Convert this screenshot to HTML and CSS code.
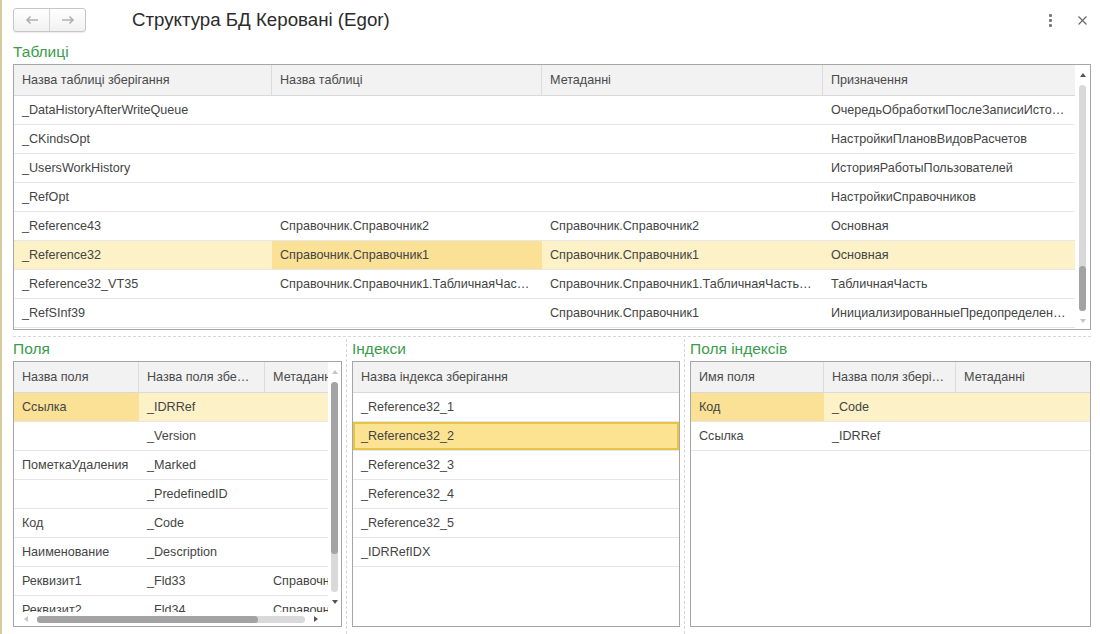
FILE: index.html
```html
<!DOCTYPE html>
<html lang="uk">
<head>
    <meta charset="UTF-8">
    <title>Структура БД Керовані (Egor)</title>
    <link rel="stylesheet" href="styles.css">
</head>
<body>
<div class="window">
    <header class="topbar">
        <div class="nav">
            <button class="nav-btn">
                <svg width="14" height="10" viewBox="0 0 14 10"><path d="M13 5H2M5.5 1.5L2 5l3.5 3.5" fill="none" stroke="#b0b0b0" stroke-width="1.6"/></svg>
            </button>
            <button class="nav-btn">
                <svg width="14" height="10" viewBox="0 0 14 10"><path d="M1 5h11M8.5 1.5L12 5 8.5 8.5" fill="none" stroke="#b0b0b0" stroke-width="1.6"/></svg>
            </button>
        </div>
        <h1 class="title">Структура БД Керовані (Egor)</h1>
        <div class="actions">
            <span class="kebab"><i></i><i></i><i></i></span>
            <svg class="close" width="9" height="9" viewBox="0 0 9 9"><path d="M0.5 0.5l8 8M8.5 0.5l-8 8" stroke="#666" stroke-width="1.1"/></svg>
        </div>
    </header>

    <div class="group-title">Таблиці</div>
    <div class="grid tables">
        <div class="grid-main">
            <div class="row head">
                <div class="cell">Назва таблиці зберігання</div>
                <div class="cell">Назва таблиці</div>
                <div class="cell">Метаданні</div>
                <div class="cell">Призначення</div>
            </div>
            <div class="rows">
                <div class="row">
                    <div class="cell">_DataHistoryAfterWriteQueue</div>
                    <div class="cell"></div>
                    <div class="cell"></div>
                    <div class="cell">ОчередьОбработкиПослеЗаписиИсторииДанных</div>
                </div>
                <div class="row">
                    <div class="cell">_CKindsOpt</div>
                    <div class="cell"></div>
                    <div class="cell"></div>
                    <div class="cell">НастройкиПлановВидовРасчетов</div>
                </div>
                <div class="row">
                    <div class="cell">_UsersWorkHistory</div>
                    <div class="cell"></div>
                    <div class="cell"></div>
                    <div class="cell">ИсторияРаботыПользователей</div>
                </div>
                <div class="row">
                    <div class="cell">_RefOpt</div>
                    <div class="cell"></div>
                    <div class="cell"></div>
                    <div class="cell">НастройкиСправочников</div>
                </div>
                <div class="row">
                    <div class="cell">_Reference43</div>
                    <div class="cell">Справочник.Справочник2</div>
                    <div class="cell">Справочник.Справочник2</div>
                    <div class="cell">Основная</div>
                </div>
                <div class="row selected">
                    <div class="cell">_Reference32</div>
                    <div class="cell current">Справочник.Справочник1</div>
                    <div class="cell">Справочник.Справочник1</div>
                    <div class="cell">Основная</div>
                </div>
                <div class="row">
                    <div class="cell">_Reference32_VT35</div>
                    <div class="cell">Справочник.Справочник1.ТабличнаяЧасть1</div>
                    <div class="cell">Справочник.Справочник1.ТабличнаяЧасть1.Товары</div>
                    <div class="cell">ТабличнаяЧасть</div>
                </div>
                <div class="row">
                    <div class="cell">_RefSInf39</div>
                    <div class="cell"></div>
                    <div class="cell">Справочник.Справочник1</div>
                    <div class="cell">ИнициализированныеПредопределенныеДанные</div>
                </div>
            </div>
        </div>
        <div class="vscroll">
            <span class="arr up dark"></span>
            <div class="track end"><div class="thumb" style="height: 45px"></div></div>
            <span class="arr down"></span>
        </div>
    </div>

    <div class="hsep"></div>

    <div class="bottom">
        <section class="panel fields">
            <div class="group-title">Поля</div>
            <div class="grid">
                <div class="grid-main">
                    <div class="row head">
                        <div class="cell">Назва поля</div>
                        <div class="cell">Назва поля зберігання</div>
                        <div class="cell clip">Метаданні</div>
                    </div>
                    <div class="rows">
                        <div class="row selected">
                            <div class="cell current">Ссылка</div>
                            <div class="cell">_IDRRef</div>
                            <div class="cell clip"></div>
                        </div>
                        <div class="row">
                            <div class="cell"></div>
                            <div class="cell">_Version</div>
                            <div class="cell clip"></div>
                        </div>
                        <div class="row">
                            <div class="cell">ПометкаУдаления</div>
                            <div class="cell">_Marked</div>
                            <div class="cell clip"></div>
                        </div>
                        <div class="row">
                            <div class="cell"></div>
                            <div class="cell">_PredefinedID</div>
                            <div class="cell clip"></div>
                        </div>
                        <div class="row">
                            <div class="cell">Код</div>
                            <div class="cell">_Code</div>
                            <div class="cell clip"></div>
                        </div>
                        <div class="row">
                            <div class="cell">Наименование</div>
                            <div class="cell">_Description</div>
                            <div class="cell clip"></div>
                        </div>
                        <div class="row">
                            <div class="cell">Реквизит1</div>
                            <div class="cell">_Fld33</div>
                            <div class="cell clip">Справочник.Справочник1</div>
                        </div>
                        <div class="row">
                            <div class="cell">Реквизит2</div>
                            <div class="cell">_Fld34</div>
                            <div class="cell clip">Справочник.Справочник2</div>
                        </div>
                    </div>
                    <div class="hscroll">
                        <span class="arr left"></span>
                        <div class="htrack"><div class="hthumb" style="width: 221px"></div></div>
                        <span class="arr right dark"></span>
                    </div>
                </div>
                <div class="vscroll narrow">
                    <span class="arr up"></span>
                    <div class="track"><div class="thumb" style="height: 172px"></div></div>
                    <span class="arr down dark"></span>
                    <div class="corner"></div>
                </div>
            </div>
        </section>

        <div class="vsep"></div>

        <section class="panel indexes">
            <div class="group-title">Індекси</div>
            <div class="grid">
                <div class="grid-main">
                    <div class="row head">
                        <div class="cell">Назва індекса зберігання</div>
                    </div>
                    <div class="rows">
                        <div class="row"><div class="cell">_Reference32_1</div></div>
                        <div class="row picked"><div class="cell">_Reference32_2</div></div>
                        <div class="row"><div class="cell">_Reference32_3</div></div>
                        <div class="row"><div class="cell">_Reference32_4</div></div>
                        <div class="row"><div class="cell">_Reference32_5</div></div>
                        <div class="row"><div class="cell">_IDRRefIDX</div></div>
                    </div>
                </div>
            </div>
        </section>

        <div class="vsep"></div>

        <section class="panel index-fields">
            <div class="group-title">Поля індексів</div>
            <div class="grid">
                <div class="grid-main">
                    <div class="row head">
                        <div class="cell">Имя поля</div>
                        <div class="cell">Назва поля зберігання</div>
                        <div class="cell">Метаданні</div>
                    </div>
                    <div class="rows">
                        <div class="row selected">
                            <div class="cell current">Код</div>
                            <div class="cell">_Code</div>
                            <div class="cell"></div>
                        </div>
                        <div class="row">
                            <div class="cell">Ссылка</div>
                            <div class="cell">_IDRRef</div>
                            <div class="cell"></div>
                        </div>
                    </div>
                </div>
            </div>
        </section>
    </div>
</div>
</body>
</html>
```

FILE: styles.css
```css
body {
    margin: 0;
    background: #fff;
    border-left: 2px solid #d3cb9f;
    font-family: "Liberation Sans", Arial, sans-serif;
    color: #444;
    height: 634px;
    overflow: hidden;
}
.window {
    padding: 0 9px 0 11px;
}

/* top bar */
.topbar {
    height: 40px;
    display: flex;
    align-items: center;
}
.nav {
    display: flex;
    width: 73px;
    height: 24px;
    box-sizing: border-box;
    border: 1px solid #c6c6c6;
    border-radius: 3px;
    background: linear-gradient(#fff, #f1f1f1);
    box-shadow: 0 1px 1px rgba(0, 0, 0, 0.08);
}
.nav-btn {
    flex: 1;
    border: 0;
    background: transparent;
    padding: 0;
    display: flex;
    align-items: center;
    justify-content: center;
}
.nav-btn + .nav-btn {
    border-left: 1px solid #d4d4d4;
}
.title {
    margin: 0 0 0 46px;
    font-size: 18.7px;
    font-weight: normal;
    color: #2b2b2b;
    flex: 1;
}
.actions {
    display: flex;
    align-items: center;
    gap: 26px;
    margin-right: 4px;
}
.kebab {
    display: flex;
    flex-direction: column;
    gap: 2px;
}
.kebab i {
    width: 3px;
    height: 3px;
    border-radius: 1px;
    background: #777;
}

/* group titles */
.group-title {
    height: 24px;
    line-height: 24px;
    font-size: 15.5px;
    color: #3b9c4c;
}

/* grids */
.grid {
    display: flex;
    height: 266px;
    box-sizing: border-box;
    border: 1px solid #a6a6a6;
    background: #fff;
    font-size: 12.6px;
}
.grid-main {
    flex: 1;
    min-width: 0;
    display: flex;
    flex-direction: column;
    overflow: hidden;
}
.rows {
    flex: 1;
    overflow: hidden;
}
.row {
    display: grid;
    height: 29px;
    box-sizing: border-box;
    border-bottom: 1px solid #e6e6e6;
}
.row.head {
    height: 31px;
    background: #f2f2f2;
    border-bottom: 1px solid #d9d9d9;
}
.cell {
    padding: 0 8px;
    line-height: 28px;
    white-space: nowrap;
    overflow: hidden;
    text-overflow: ellipsis;
}
.head .cell {
    line-height: 30px;
    color: #4a4a4a;
    border-right: 1px solid #dcdcdc;
}
.head .cell:last-child {
    border-right: 0;
}
.cell.clip {
    text-overflow: clip;
}
.row.selected {
    background: #fdf1c8;
}
.cell.current {
    background: #fae196;
}
.row.picked {
    background: #fce392;
    box-shadow: inset 0 0 0 2px #e8c446;
}

.tables .row {
    grid-template-columns: 258px 270px 281px 1fr;
}
.fields .row {
    grid-template-columns: 125px 126px 140px;
}
.indexes .row {
    grid-template-columns: 1fr;
}
.index-fields .row {
    grid-template-columns: 133px 132px 1fr;
}

/* scrollbars */
.vscroll {
    width: 15px;
    display: flex;
    flex-direction: column;
    align-items: center;
    padding: 8px 0 6px;
    box-sizing: border-box;
}
.vscroll.narrow {
    width: 13px;
    padding-bottom: 0;
}
.track {
    flex: 1;
    width: 7px;
    margin: 8px 0;
    border-radius: 4px;
    background: #d9d9d9;
    display: flex;
    flex-direction: column;
}
.track.end {
    justify-content: flex-end;
}
.thumb {
    border-radius: 4px;
    background: #a3a3a3;
}
.corner {
    height: 22px;
}
.arr {
    width: 0;
    height: 0;
    border: 3px solid transparent;
}
.arr.up {
    border-bottom: 4px solid #c4c4c4;
    border-top: 0;
}
.arr.down {
    border-top: 4px solid #c4c4c4;
    border-bottom: 0;
}
.arr.left {
    border-right: 4px solid #c4c4c4;
    border-left: 0;
}
.arr.right {
    border-left: 4px solid #c4c4c4;
    border-right: 0;
}
.arr.up.dark { border-bottom-color: #555; }
.arr.down.dark { border-top-color: #555; }
.arr.right.dark { border-left-color: #555; }

.hscroll {
    height: 14px;
    display: flex;
    align-items: center;
    padding: 0 10px;
    background: #fff;
    margin-top: -5px;
}
.htrack {
    flex: 1;
    height: 7px;
    margin: 0 9px;
    border-radius: 4px;
    background: #d9d9d9;
    display: flex;
}
.hthumb {
    border-radius: 4px;
    background: #a3a3a3;
}

/* separators */
.hsep {
    margin-top: 6px;
    border-top: 1px dashed #d6d6d6;
}
.bottom {
    display: flex;
    height: 297px;
}
.panel.fields {
    width: 329px;
}
.panel.indexes {
    width: 328px;
}
.panel.index-fields {
    flex: 1;
}
.vsep {
    margin: 2px 5px 0 4px;
    border-left: 1px dashed #d6d6d6;
}
```
